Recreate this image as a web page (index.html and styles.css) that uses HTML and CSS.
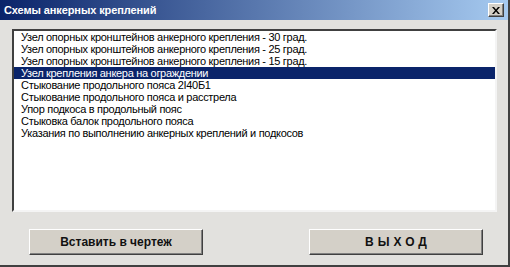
FILE: index.html
```html
<!DOCTYPE html>
<html lang="ru">

<head>
    <meta charset="UTF-8">
    <title>Схемы анкерных креплений</title>
    <link rel="stylesheet" href="styles.css">
</head>

<body>
    <div class="window">
        <div class="titlebar">
            <span class="title">Схемы анкерных креплений</span>
            <button class="close-btn" aria-label="Закрыть">
                <svg width="8" height="7" viewBox="0 0 8 7">
                    <path d="M0 0h2l2 2.5L6 0h2L5 3.5 8 7H6L4 4.5 2 7H0l3-3.5z" fill="#000" />
                </svg>
            </button>
        </div>

        <div class="content">
            <ul class="listbox">
                <li class="list-item">Узел опорных кронштейнов анкерного крепления - 30 град.</li>
                <li class="list-item">Узел опорных кронштейнов анкерного крепления - 25 град.</li>
                <li class="list-item">Узел опорных кронштейнов анкерного крепления - 15 град.</li>
                <li class="list-item selected">Узел крепления анкера на ограждении</li>
                <li class="list-item">Стыкование продольного пояса 2I40Б1</li>
                <li class="list-item">Стыкование продольного пояса и расстрела</li>
                <li class="list-item">Упор подкоса в продольный пояс</li>
                <li class="list-item">Стыковка балок продольного пояса</li>
                <li class="list-item">Указания по выполнению анкерных креплений и подкосов</li>
            </ul>

            <div class="buttons">
                <button class="btn">Вставить в чертеж</button>
                <button class="btn btn-exit">ВЫХОД</button>
            </div>
        </div>
    </div>
</body>

</html>
```

FILE: styles.css
```css
:root {
    --face: #e2e1de;
    --button-face: #d4d0c8;
    --shadow: #808080;
    --dark: #404040;
    --select: #0a246a;
}

* {
    margin: 0;
    padding: 0;
    box-sizing: border-box;
}

body {
    font-family: 'Liberation Sans', Arial, sans-serif;
    background: var(--face);
    width: 510px;
    height: 267px;
    overflow: hidden;
}

.window {
    width: 510px;
    height: 267px;
    background: var(--face);
    border-right: 2px solid var(--dark);
    border-bottom: 2px solid var(--dark);
    display: flex;
    flex-direction: column;
}

.titlebar {
    height: 20px;
    background: linear-gradient(to right, #0a246a, #a6caf0);
    display: flex;
    align-items: center;
    justify-content: space-between;
    padding: 0 4px 0 4px;
}

.title {
    color: #fff;
    font-weight: bold;
    font-size: 11px;
    letter-spacing: -0.1px;
}

.close-btn {
    width: 16px;
    height: 14px;
    background: var(--button-face);
    border: 1px solid;
    border-color: #fff var(--dark) var(--dark) #fff;
    box-shadow: inset -1px -1px 0 var(--shadow);
    display: flex;
    align-items: center;
    justify-content: center;
}

.content {
    flex: 1;
    padding: 9px 11px 0 12px;
}

.listbox {
    list-style: none;
    height: 183px;
    width: 485px;
    background: #fff;
    border: 2px solid;
    border-color: var(--dark) #f4f4f4 #f4f4f4 var(--dark);
}

.list-item {
    font-size: 11px;
    line-height: 12px;
    height: 12px;
    letter-spacing: -0.3px;
    color: #000;
    padding-left: 7px;
    white-space: nowrap;
}

.list-item.selected {
    background: var(--select);
    color: #fff;
}

.buttons {
    display: flex;
    gap: 106px;
    padding: 17px 0 0 17px;
}

.btn {
    width: 174px;
    height: 26px;
    background: var(--button-face);
    border: 1px solid;
    border-color: #fff var(--dark) var(--dark) #fff;
    box-shadow: inset -1px -1px 0 var(--shadow);
    font-family: 'Liberation Sans', Arial, sans-serif;
    font-weight: bold;
    font-size: 12px;
    color: #111;
}

.btn-exit {
    letter-spacing: 4px;
    text-indent: 4px;
}
```
